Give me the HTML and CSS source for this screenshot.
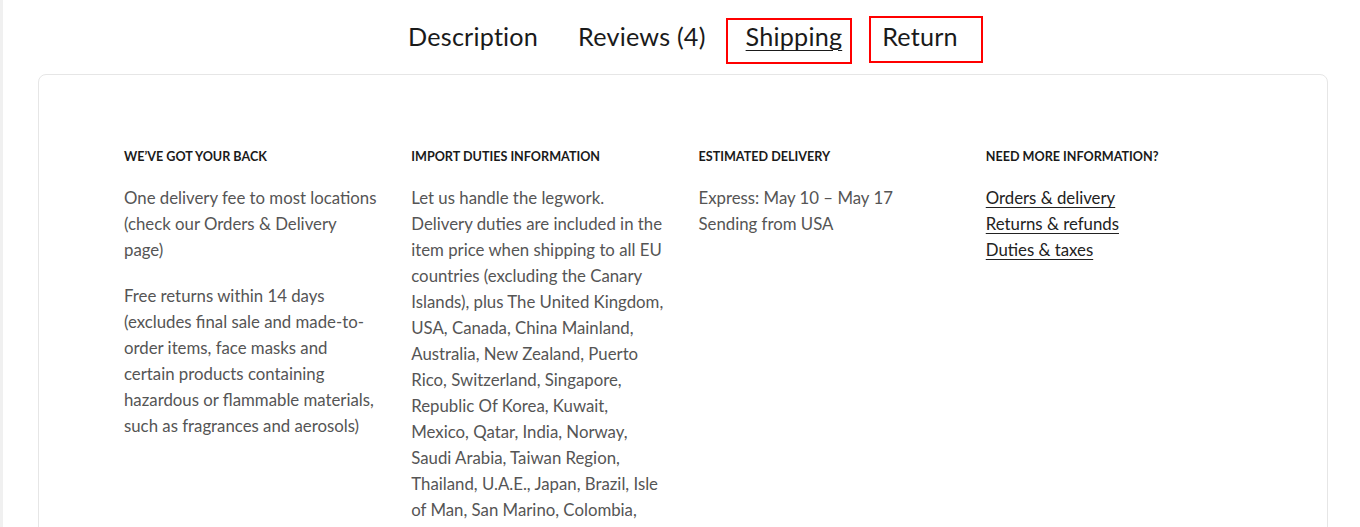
FILE: index.html
```html
<!DOCTYPE html>
<html lang="en">
<head>
<meta charset="utf-8">
<title>Shipping</title>
<link rel="stylesheet" href="styles.css">
</head>
<body>
<div class="page">
  <nav class="tabs">
    <a class="tab">Description</a>
    <a class="tab">Reviews (4)</a>
    <a class="tab tab-active mark mark-ship">Shipping</a>
    <a class="tab mark mark-return">Return</a>
  </nav>
  <section class="card">
    <div class="grid">
      <div class="col">
        <h3 class="heading">WE’VE GOT YOUR BACK</h3>
        <p class="text">One delivery fee to most locations (check our Orders &amp; Delivery page)</p>
        <p class="text">Free returns within 14 days (excludes final sale and made-to-order items, face masks and certain products containing hazardous or flammable materials, such as fragrances and aerosols)</p>
      </div>
      <div class="col">
        <h3 class="heading">IMPORT DUTIES INFORMATION</h3>
        <p class="text">Let us handle the legwork. Delivery duties are included in the item price when shipping to all EU countries (excluding the Canary Islands), plus The United Kingdom, USA, Canada, China Mainland, Australia, New Zealand, Puerto Rico, Switzerland, Singapore, Republic Of Korea, Kuwait, Mexico, Qatar, India, Norway, Saudi Arabia, Taiwan Region, Thailand, U.A.E., Japan, Brazil, Isle of Man, San Marino, Colombia, Chile, Argentina, Egypt, Lebanon, Hong Kong SAR, Bahrain and Turkey. All import duties are included in your order – the price you see is the price you pay.</p>
      </div>
      <div class="col">
        <h3 class="heading">ESTIMATED DELIVERY</h3>
        <p class="text">Express: May 10 – May 17<br>Sending from USA</p>
      </div>
      <div class="col">
        <h3 class="heading">NEED MORE INFORMATION?</h3>
        <ul class="links">
          <li><a class="link">Orders &amp; delivery</a></li>
          <li><a class="link">Returns &amp; refunds</a></li>
          <li><a class="link">Duties &amp; taxes</a></li>
        </ul>
      </div>
    </div>
  </section>
</div>
</body>
</html>
```

FILE: styles.css
```css
html, body {
  margin: 0;
  padding: 0;
  background: #fff;
}
body {
  font-family: "Lato", "Liberation Sans", sans-serif;
  color: #222;
  border-left: 3px solid #f0f0f0;
  overflow: hidden;
  height: 527px;
  box-sizing: border-box;
}
.page {
  padding: 0 32px 0 35px;
}
.tabs {
  display: flex;
  justify-content: center;
  gap: 40px;
  padding-top: 19px;
  height: 74px;
  box-sizing: border-box;
}
.tab {
  position: relative;
  font-size: 25.2px;
  letter-spacing: 0.2px;
  line-height: 34px;
  color: #1a1a1a;
  text-decoration: none;
  height: 34px;
}
.tab-active {
  text-decoration: underline;
  text-underline-offset: 4px;
  text-decoration-thickness: 1px;
}
.mark::after {
  content: "";
  position: absolute;
  border: 2px solid #ff0000;
  box-sizing: border-box;
}
.mark-ship::after {
  left: -20px;
  right: -10px;
  top: -1px;
  height: 46px;
}
.mark-return::after {
  left: -13px;
  right: -25px;
  top: -3px;
  height: 47px;
}
.card {
  border: 1px solid #e6e6e6;
  border-radius: 8px;
  min-height: 600px;
  padding: 75px 86px 40px 85px;
}
.grid {
  display: grid;
  grid-template-columns: repeat(4, 1fr);
  gap: 32px;
}
.heading {
  margin: 0 0 21px;
  font-size: 12.6px;
  line-height: 14px;
  font-weight: 700;
  color: #1a1a1a;
}
.text {
  margin: 0 0 20px;
  font-size: 16.8px;
  line-height: 26px;
  color: #555;
}
.links {
  list-style: none;
  margin: 0;
  padding: 0;
}
.links li {
  font-size: 16.8px;
  line-height: 26px;
}
.link {
  color: #222;
  text-decoration: underline;
  text-underline-offset: 3px;
  text-decoration-thickness: 1px;
}
```
